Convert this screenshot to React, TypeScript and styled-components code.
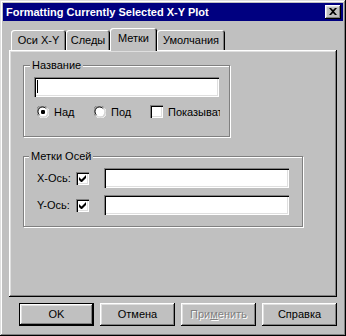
import styled, { createGlobalStyle } from 'styled-components';

const GlobalStyle = createGlobalStyle`
  body {
    margin: 0;
    background: #c0c0c0;
  }
  * {
    box-sizing: border-box;
  }
`;

const Window = styled.div`
  width: 346px;
  height: 336px;
  padding: 3px;
  display: flex;
  flex-direction: column;
  background: #c0c0c0;
  box-shadow: inset -1px -1px 0 #000, inset 1px 1px 0 #dfdfdf, inset -2px -2px 0 #808080, inset 2px 2px 0 #fff;
  font-family: "Liberation Sans", Arial, sans-serif;
  font-size: 11px;
  color: #000;
`;

const TitleBar = styled.div`
  height: 18px;
  display: flex;
  align-items: center;
  justify-content: space-between;
  padding: 0 2px 0 3px;
  background: #000080;
  color: #fff;
  font-weight: bold;
`;

const BevelButton = styled.div`
  display: flex;
  align-items: center;
  justify-content: center;
  background: #c0c0c0;
  box-shadow: inset -1px -1px 0 #000, inset 1px 1px 0 #fff, inset -2px -2px 0 #808080, inset 2px 2px 0 #dfdfdf;
`;

const CloseButton = styled(BevelButton)`
  width: 16px;
  height: 14px;
  padding: 0 1px 1px 0;
`;

const Body = styled.div`
  flex: 1;
  display: flex;
  flex-direction: column;
  padding: 7px 6px 0;
`;

const TabRow = styled.div`
  height: 22px;
  display: flex;
  align-items: flex-end;
  padding-left: 2px;
  position: relative;
  z-index: 1;
`;

const Tab = styled.div<{ $w: number; $active?: boolean }>`
  width: ${(p) => p.$w}px;
  height: ${(p) => (p.$active ? 23 : 20)}px;
  margin-bottom: ${(p) => (p.$active ? -1 : 0)}px;
  display: flex;
  justify-content: center;
  padding-top: 4px;
  background: #c0c0c0;
  border-radius: 3px 3px 0 0;
  box-shadow: inset 1px 1px 0 #fff, inset -1px 0 0 #000, inset -2px 0 0 #808080;
`;

const Panel = styled.div`
  height: 247px;
  display: flex;
  flex-direction: column;
  padding: 15px 0 0 14px;
  background: #c0c0c0;
  box-shadow: inset -1px -1px 0 #000, inset 1px 1px 0 #fff, inset -2px -2px 0 #808080, inset 2px 2px 0 #dfdfdf;
`;

const Group = styled.div<{ $w: number; $h: number; $gap?: number }>`
  width: ${(p) => p.$w}px;
  height: ${(p) => p.$h}px;
  margin-top: ${(p) => p.$gap ?? 0}px;
  display: flex;
  flex-direction: column;
  border: 1px solid #808080;
  box-shadow: 1px 1px 0 #fff, inset 1px 1px 0 #fff;
`;

const Caption = styled.div<{ $x: number }>`
  align-self: flex-start;
  height: 13px;
  line-height: 13px;
  margin: -7px 0 0 ${(p) => p.$x}px;
  padding: 0 2px;
  background: #c0c0c0;
`;

const Field = styled.div<{ $x?: number; $y?: number }>`
  width: 185px;
  height: 20px;
  margin: ${(p) => p.$y ?? 0}px 0 0 ${(p) => p.$x ?? 0}px;
  padding: 3px 0 0 3px;
  background: #fff;
  box-shadow: inset 1px 1px 0 #808080, inset 2px 2px 0 #000, inset -1px -1px 0 #fff, inset -2px -2px 0 #dfdfdf;
`;

const Caret = styled.div`
  width: 1px;
  height: 13px;
  background: #000;
`;

const OptionRow = styled.div`
  display: flex;
  align-items: center;
  height: 13px;
  margin: 8px 0 0 13px;
`;

const Option = styled.div<{ $w: number }>`
  width: ${(p) => p.$w}px;
  display: flex;
  align-items: center;
  gap: 5px;
  overflow: hidden;
  white-space: nowrap;
`;

const Box = styled.div`
  flex: none;
  width: 13px;
  height: 13px;
  display: flex;
  align-items: center;
  justify-content: center;
  background: #fff;
  box-shadow: inset 1px 1px 0 #808080, inset 2px 2px 0 #000, inset -1px -1px 0 #fff, inset -2px -2px 0 #dfdfdf;
`;

const AxisRow = styled.div<{ $y: number }>`
  height: 20px;
  display: flex;
  align-items: center;
  margin: ${(p) => p.$y}px 0 0 13px;
`;

const AxisLabel = styled.span`
  width: 39px;
`;

const ButtonRow = styled.div`
  display: flex;
  justify-content: flex-end;
  gap: 6px;
  margin-top: 6px;
`;

const PushButton = styled(BevelButton)<{ $default?: boolean; $disabled?: boolean }>`
  width: 75px;
  height: 23px;
  padding-bottom: 1px;
  color: ${(p) => (p.$disabled ? '#808080' : '#000')};
  text-shadow: ${(p) => (p.$disabled ? '1px 1px 0 #fff' : 'none')};
  ${(p) =>
    p.$default &&
    `box-shadow: inset 0 0 0 1px #000, inset -2px -2px 0 #000, inset 2px 2px 0 #fff, inset -3px -3px 0 #808080, inset 3px 3px 0 #dfdfdf;`}
`;

const Radio = ({ on }: { on?: boolean }) => (
  <svg width="12" height="12" viewBox="0 0 12 12" style={{ flex: 'none' }}>
    <path d="M1 9.5A5 5 0 0 1 9.5 1" stroke="#808080" strokeWidth="1" fill="none" />
    <circle cx="6" cy="6" r="4.5" fill="#fff" />
    <path d="M2.2 8.6A4 4 0 0 1 8.6 2.2" stroke="#000" strokeWidth="1" fill="none" />
    <path d="M2.5 10.5A5 5 0 0 0 10.5 2.5" stroke="#fff" strokeWidth="1" fill="none" />
    <path d="M3.4 9.8A4 4 0 0 0 9.8 3.4" stroke="#dfdfdf" strokeWidth="1" fill="none" />
    {on && <rect x="4" y="4" width="4" height="4" rx="1.2" fill="#000" />}
  </svg>
);

const Check = () => (
  <svg width="7" height="7" viewBox="0 0 7 7">
    <path d="M0 2v3l2 2h1l4-4V0L2.5 4.5z" fill="#000" />
  </svg>
);

export default function App() {
  return (
    <>
      <GlobalStyle />
      <Window>
        <TitleBar>
          <span>Formatting Currently Selected X-Y Plot</span>
          <CloseButton>
            <svg width="8" height="7" viewBox="0 0 8 7">
              <path d="M0 0h2l2 2 2-2h2L5 3.5 8 7H6L4 5 2 7H0l3-3.5z" fill="#000" />
            </svg>
          </CloseButton>
        </TitleBar>
        <Body>
          <TabRow>
            <Tab $w={55}>Оси X-Y</Tab>
            <Tab $w={44}>Следы</Tab>
            <Tab $w={47} $active>
              Метки
            </Tab>
            <Tab $w={68}>Умолчания</Tab>
          </TabRow>
          <Panel>
            <Group $w={207} $h={72}>
              <Caption $x={6}>Название</Caption>
              <Field $x={10} $y={5}>
                <Caret />
              </Field>
              <OptionRow>
                <Option $w={57}>
                  <Radio on />
                  Над
                </Option>
                <Option $w={56}>
                  <Radio />
                  Под
                </Option>
                <Option $w={70}>
                  <Box />
                  Показывать
                </Option>
              </OptionRow>
            </Group>
            <Group $w={280} $h={71} $gap={19}>
              <Caption $x={5}>Метки Осей</Caption>
              <AxisRow $y={5}>
                <AxisLabel>X-Ось:</AxisLabel>
                <Box>
                  <Check />
                </Box>
                <Field $x={15} />
              </AxisRow>
              <AxisRow $y={7}>
                <AxisLabel>Y-Ось:</AxisLabel>
                <Box>
                  <Check />
                </Box>
                <Field $x={15} />
              </AxisRow>
            </Group>
          </Panel>
          <ButtonRow>
            <PushButton $default>OK</PushButton>
            <PushButton>Отмена</PushButton>
            <PushButton $disabled>
              <span>
                При<u>м</u>енить
              </span>
            </PushButton>
            <PushButton>Справка</PushButton>
          </ButtonRow>
        </Body>
      </Window>
    </>
  );
}
